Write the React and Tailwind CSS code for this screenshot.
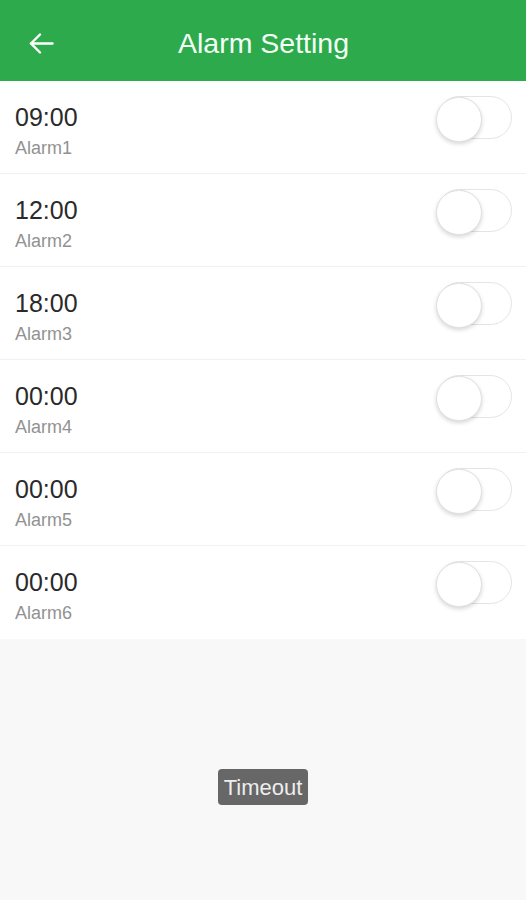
import React from "react";

const alarms = [
  { time: "09:00", name: "Alarm1" },
  { time: "12:00", name: "Alarm2" },
  { time: "18:00", name: "Alarm3" },
  { time: "00:00", name: "Alarm4" },
  { time: "00:00", name: "Alarm5" },
  { time: "00:00", name: "Alarm6" },
];

function Toggle() {
  return (
    <div className="relative w-[76px] h-[46px] mr-[14px] mt-[15px] self-start">
      <div className="absolute left-[2px] right-0 top-0 h-[43px] rounded-full border border-[#e4e4e4] bg-white" />
      <div className="absolute left-0 top-[1px] w-[46px] h-[45px] rounded-full bg-white border border-[#e0e0e0] shadow-[0_2px_4px_rgba(0,0,0,0.16)]" />
    </div>
  );
}

export default function App() {
  return (
    <div
      className="w-[526px] h-[900px] bg-[#f8f8f8] flex flex-col"
      style={{ fontFamily: '"Liberation Sans", Arial, sans-serif' }}
    >
      <div className="h-[81px] bg-[#2daa4c] flex items-center relative shrink-0">
        <div className="absolute left-[29px] top-[33px]">
          <svg width="25" height="21" viewBox="0 0 25 21" fill="none" stroke="white" strokeWidth="2.4" strokeLinecap="round" strokeLinejoin="round">
            <path d="M23.5 10.5H2" />
            <path d="M11 1.5L2 10.5l9 9" />
          </svg>
        </div>
        <div className="flex-1 text-center text-[#f4fff6] text-[28.5px] pt-[5px] pl-[1px]">Alarm Setting</div>
      </div>
      <div className="bg-white flex flex-col">
        {alarms.map((a, i) => (
          <div
            key={i}
            className={`h-[93px] flex justify-between pl-[15px] ${i < 5 ? "border-b border-[#f1f1f1]" : ""}`}
          >
            <div className="flex flex-col pt-[21px]">
              <div className="text-[25px] leading-[30px] text-[#2a2a2a]">{a.time}</div>
              <div className="text-[18px] leading-[22px] text-[#929292] mt-[5px]">{a.name}</div>
            </div>
            <Toggle />
          </div>
        ))}
      </div>
      <div className="flex-1 flex justify-center">
        <div className="mt-[130px] h-[36px] px-[6px] bg-[#676767] rounded-[4px] text-[#ededed] text-[22px] flex items-center">
          Timeout
        </div>
      </div>
    </div>
  );
}
